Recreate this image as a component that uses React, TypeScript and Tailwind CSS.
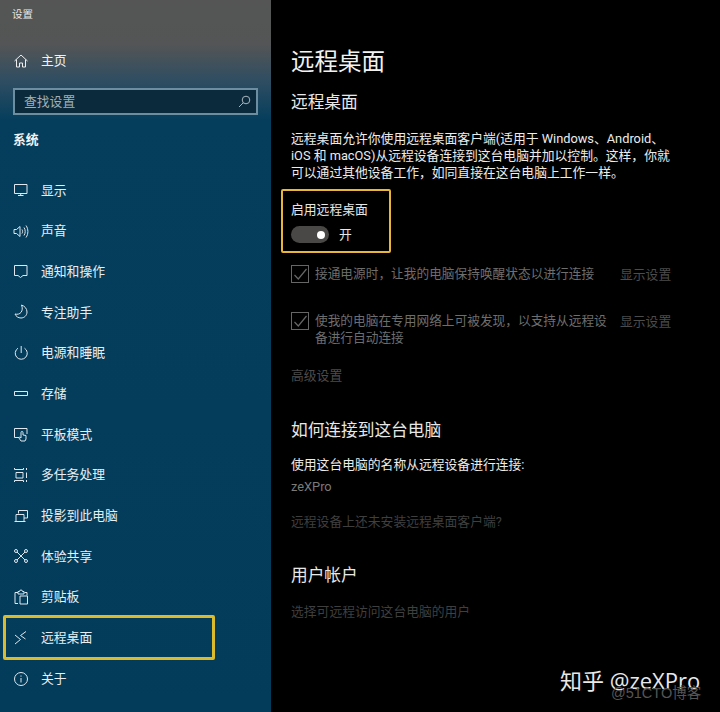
import type { ReactNode } from "react";

const cjk = "font-['Roboto','Noto_Sans_CJK_SC',sans-serif]";

function Glyph({ children }: { children: ReactNode }) {
  return (
    <svg width="16" height="16" viewBox="0 0 16 16" fill="none" stroke="#dfe8ee" strokeWidth="1" className="shrink-0">
      {children}
    </svg>
  );
}

const navItems: { label: string; icon: ReactNode }[] = [
  {
    label: "显示",
    icon: <path d="M1.500 2.500h12.500v9H1.500zM5 13.500h5.500M7.700 11.500v2" />,
  },
  {
    label: "声音",
    icon: <path d="M1 6.500h2.500L7 3.500v10L3.500 10.500H1zM9 6.500c.8 1.200 .8 2.800 0 4M11 4.500c1.600 2.300 1.600 5.700 0 8M13 2.500c2.500 3.500 2.500 8.500 0 12" />,
  },
  {
    label: "通知和操作",
    icon: <path d="M1.500 1.500h12.500v10H10l-2.500 2-2.500-2H1.500z" />,
  },
  {
    label: "专注助手",
    icon: <path d="M8.500 1c3 1 5.500 3.500 5.500 7 0 3.500-2.800 6-6 6-2.700 0-5-1.500-6-4 5 1.500 9-3 6.500-9z" />,
  },
  {
    label: "电源和睡眠",
    icon: <path d="M5 3.200a6 6 0 1 0 6.500 0M8.200 1v7" />,
  },
  {
    label: "存储",
    icon: <path d="M1.500 5.500h13v4h-13z" />,
  },
  {
    label: "平板模式",
    icon: <path d="M6 11.500H1.500v-9h12.500v5.500M8 15l-2.200-3.200L6.500 11 8 12V6.500a1 1 0 0 1 2 0V9l3 .5V13l-1 2z" />,
  },
  {
    label: "多任务处理",
    icon: <path d="M1.500 1v1.500h9V1M3 5.500h7v5.500H3zM1.500 15v-1.500h9V15M13.500 1v2M13.500 5.500v5.500M13.500 13v2" />,
  },
  {
    label: "投影到此电脑",
    icon: <path d="M5.500 5.500V2.500h9v7.500H11M1.500 13.500h11M3 13.500V6.500h8v7" />,
  },
  {
    label: "体验共享",
    icon: (
      <>
        <path d="M4 4l8 8M12 4l-8 8" />
        <circle cx="3" cy="3" r="1.500" />
        <circle cx="13" cy="3" r="1.500" />
        <circle cx="3" cy="13" r="1.500" />
        <circle cx="13" cy="13" r="1.500" />
      </>
    ),
  },
  {
    label: "剪贴板",
    icon: <path d="M5 14.500H2V3.500h3M11.500 3.500H14v3M5 3.500V2.500h1.500a1.500 1.500 0 0 1 3 0H11v2.500H5zM7 7h7.500v8H7z" />,
  },
  {
    label: "远程桌面",
    icon: <path d="M2 5l5.500 4.500L2 14M13 1.500L7.500 5.500 12.500 9" />,
  },
  {
    label: "关于",
    icon: (
      <>
        <circle cx="8" cy="8" r="6.500" />
        <path d="M8 7v4.500M8 4.500v1.200" />
      </>
    ),
  },
];

function NavRow({ label, icon, active }: { label: string; icon: ReactNode; active?: boolean }) {
  return (
    <div
      className={`flex items-center gap-[12px] text-[12.800px] text-[#e8eef2] ${
        active
          ? "-my-[2px] ml-[3px] mr-[56px] box-border h-[45px] rounded-[2px] border-[3px] border-[#d9bb2c] pl-[7px]"
          : "h-[40.670px] pl-[13px]"
      }`}
    >
      <Glyph>{icon}</Glyph>
      <span>{label}</span>
    </div>
  );
}

function CheckRow({ children, link }: { children: ReactNode; link: string }) {
  return (
    <div className="flex items-start">
      <span className="flex h-[18px] w-[18px] shrink-0 items-center justify-center border-[1.500px] border-[#666666]">
        <svg width="15" height="15" viewBox="0 0 15 15" fill="none" stroke="#666666" strokeWidth="1.200">
          <path d="M1.500 8l3.800 4L13.500 2" />
        </svg>
      </span>
      <p className="ml-[6px] w-[293px] text-[12.700px] leading-[17px] text-[#6e6e6e]">{children}</p>
      <span className="ml-[12px] mt-[1px] text-[12.800px] leading-[17px] text-[#4c4c4c]">{link}</span>
    </div>
  );
}

export default function App() {
  return (
    <div className={`relative flex h-[712px] w-[720px] overflow-hidden bg-black ${cjk}`}>
      <aside className="flex h-full w-[271px] shrink-0 flex-col bg-[linear-gradient(180deg,#555555_0px,#535556_45px,#2e4d62_82px,#053e5c_120px,#033c5a_100%)]">
        <div className="pl-[12px] pt-[7px] text-[10.500px] leading-[15px] text-[#e6e6e6]">设置</div>
        <div className="mt-[29px] flex h-[20px] items-center gap-[12px] pl-[13px] text-[12.800px] text-[#f0f0f0]">
          <svg width="16" height="16" viewBox="0 0 16 16" fill="none" stroke="#eeeeee" strokeWidth="1" className="shrink-0">
            <path d="M1.500 8L8 2l6.500 6M3.500 6.500V14h3v-4h3v4h3V6.500" />
          </svg>
          <span>主页</span>
        </div>
        <div className="mx-[13px] mt-[17px] flex h-[27px] items-center justify-between border-2 border-[#6d8ea1] bg-[#0b2a3c] pl-[9px] pr-[5px] text-[12.800px] text-[#a3aeb5]">
          <span>查找设置</span>
          <svg width="13" height="13" viewBox="0 0 13 13" fill="none" stroke="#a9b6bd" strokeWidth="1">
            <circle cx="8" cy="5" r="3.800" />
            <path d="M5.200 7.800L1 12" />
          </svg>
        </div>
        <div className="mt-[16px] pl-[13px] text-[12.800px] font-bold leading-[18px] text-[#eef3f6]">系统</div>
        <nav className="mt-[21px] flex flex-col">
          {navItems.map((item) => (
            <NavRow key={item.label} label={item.label} icon={item.icon} active={item.label === "远程桌面"} />
          ))}
        </nav>
      </aside>

      <main className="flex-1 pl-[20px] pt-[45px] text-white">
        <h1 className="text-[23.500px] font-normal leading-[34px] text-[#f2f2f2]">远程桌面</h1>
        <h2 className="mt-[12px] text-[16.700px] leading-[24px] text-[#e8e8e8]">远程桌面</h2>
        <p className="mt-[15px] w-[385px] text-[12.800px] leading-[17px] text-[#ececec]">
          远程桌面允许你使用远程桌面客户端(适用于 Windows、Android、iOS 和 macOS)从远程设备连接到这台电脑并加以控制。这样，你就可以通过其他设备工作，如同直接在这台电脑上工作一样。
        </p>
        <div className="-ml-[10px] mt-[8px] h-[64px] w-[110px] rounded-[2px] border-[2px] border-[#e8b739] pl-[8px] pt-[10px]">
          <div className="text-[12.800px] leading-[17px] text-[#e6e6e6]">启用远程桌面</div>
          <div className="mt-[8px] flex items-center gap-[10px]">
            <span className="flex h-[17px] w-[38px] items-center justify-end rounded-full bg-[#4a4846] pr-[4px]">
              <span className="h-[8px] w-[8px] rounded-full bg-white" />
            </span>
            <span className="text-[12.800px] leading-[17px] text-[#e6e6e6]">开</span>
          </div>
        </div>
        <div className="mt-[12px] flex flex-col gap-[29px]">
          <CheckRow link="显示设置">接通电源时，让我的电脑保持唤醒状态以进行连接</CheckRow>
          <CheckRow link="显示设置">使我的电脑在专用网络上可被发现，以支持从远程设备进行自动连接</CheckRow>
        </div>
        <div className="mt-[21px] text-[12.800px] leading-[17px] text-[#4c4c4c]">高级设置</div>
        <h2 className="mt-[35px] text-[16.700px] leading-[24px] text-[#e8e8e8]">如何连接到这台电脑</h2>
        <div className="mt-[13px] text-[12.800px] leading-[17px] text-[#ececec]">使用这台电脑的名称从远程设备进行连接:</div>
        <div className="mt-[5px] text-[12.800px] leading-[17px] text-[#7a7a7a]">zeXPro</div>
        <div className="mt-[18px] text-[12.800px] leading-[17px] text-[#3f3f3f]">远程设备上还未安装远程桌面客户端?</div>
        <h2 className="mt-[34px] text-[16.700px] leading-[24px] text-[#e8e8e8]">用户帐户</h2>
        <div className="mt-[15px] text-[12.800px] leading-[17px] text-[#3f3f3f]">选择可远程访问这台电脑的用户</div>
      </main>

      <div className="absolute left-[560px] top-[665px] font-['Open_Sans','Noto_Sans_CJK_SC',sans-serif] text-[22px] leading-[30px] text-[#e8e8e8]">知乎 @zeXPro</div>
      <div className="absolute left-[611px] top-[683px] font-['Liberation_Sans','Noto_Sans_CJK_SC',sans-serif] text-[14.500px] leading-[20px] text-[#555555]">@51CTO博客</div>
    </div>
  );
}
